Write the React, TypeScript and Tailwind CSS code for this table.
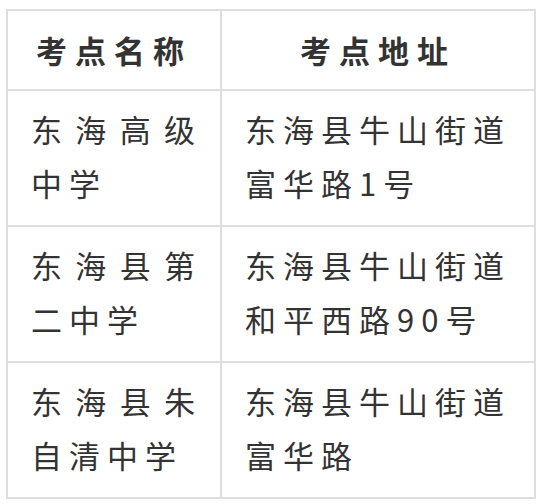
/**
 * 考点一览 — 两列表格：考点名称 | 考点地址
 */

const rows = [
  { name: "东海高级中学", addr: "东海县牛山街道富华路1号" },
  { name: "东海县第二中学", addr: "东海县牛山街道和平西路90号" },
  { name: "东海县朱自清中学", addr: "东海县牛山街道富华路" },
];

const font = "font-['Noto_Sans_CJK_SC','Noto_Sans',sans-serif]";

export default function App() {
  return (
    <div className={`w-[542px] h-[504px] bg-white pt-[9px] pl-[6px] ${font}`}>
      <div className="grid w-[530px] grid-cols-[212px_312px] gap-[2px] bg-[#dedede] p-[2px] text-[31px] tracking-[7px] text-[#333]">
        {/* 表头 */}
        <div className="bg-white py-[12px] text-center font-bold leading-[54px] tracking-[8px]">考点名称</div>
        <div className="bg-white py-[12px] text-center font-bold leading-[54px] tracking-[8px]">考点地址</div>

        {/* 数据行 */}
        {rows.map((r) => (
          <div key={r.name} className="contents">
            <div className="bg-white pt-[11px] pb-[15px] pl-[23px] pr-[18px] text-justify leading-[54px]">
              {r.name}
            </div>
            <div className="bg-white pt-[11px] pb-[15px] pl-[23px] pr-4 leading-[54px]">{r.addr}</div>
          </div>
        ))}
      </div>
    </div>
  );
}
